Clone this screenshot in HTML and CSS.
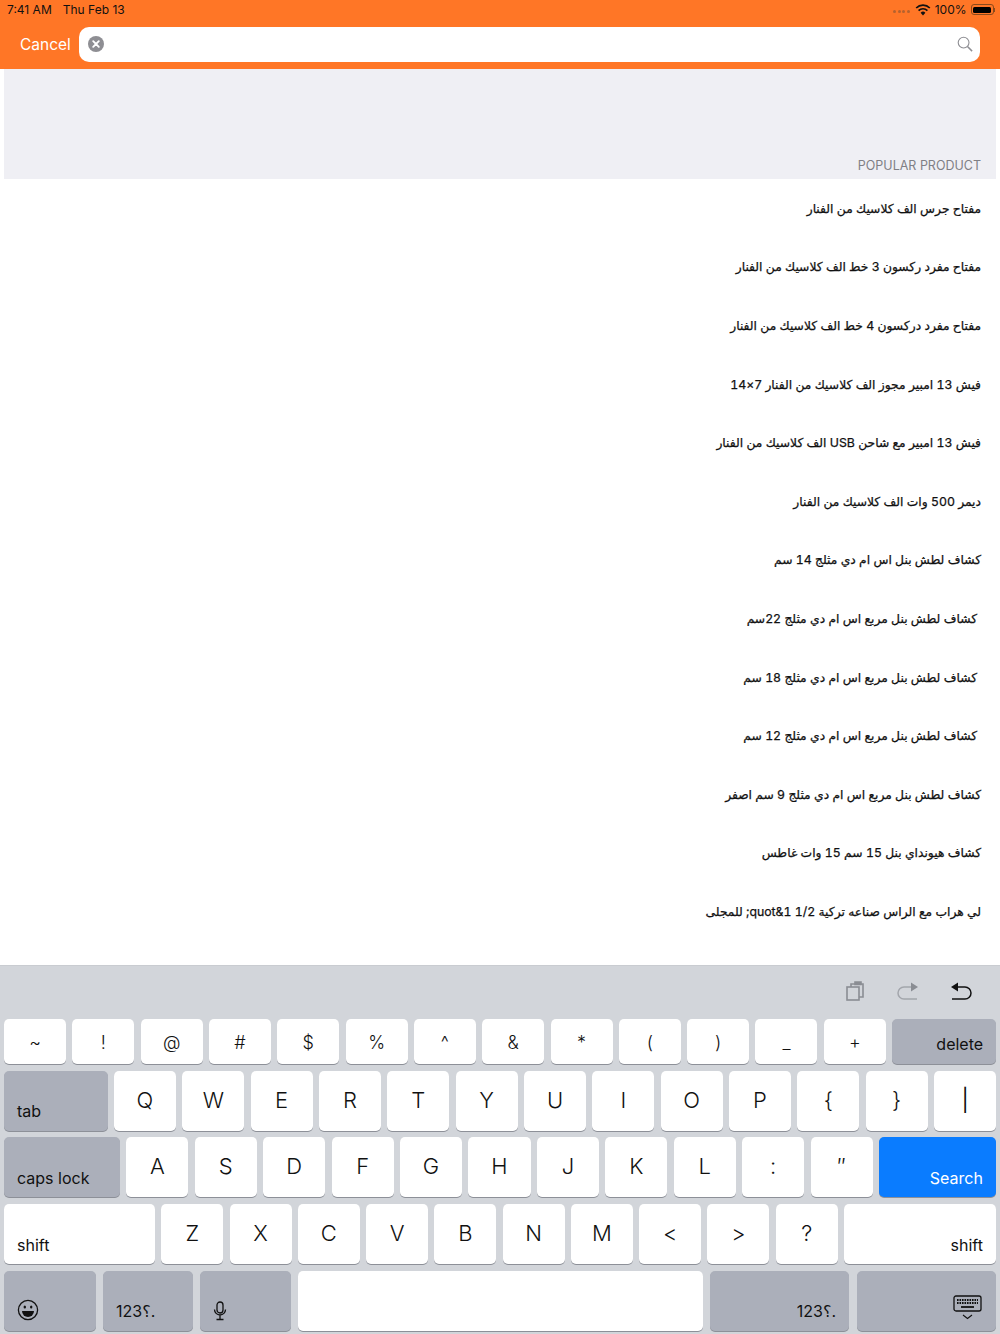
FILE: index.html
```html
<!DOCTYPE html>
<html lang="en">
<head>
    <meta charset="UTF-8">
    <meta name="viewport" content="width=device-width, initial-scale=1.0">
    <title>Search</title>
    <link rel="stylesheet" href="styles.css">
</head>
<body>
    <div class="screen">
        <header class="top-bar">
            <div class="status-bar">
                <div class="status-left">
                    <span>7:41 AM</span>
                    <span>Thu Feb 13</span>
                </div>
                <div class="status-right">
                    <span class="signal"><i></i><i></i><i></i><i></i></span>
                    <svg class="wifi" width="16" height="12" viewBox="0 0 16 12">
                        <path d="M8 11.5 5.6 8.8a3.4 3.4 0 0 1 4.8 0Z" fill="#111"/>
                        <path d="M3.6 6.6a6.2 6.2 0 0 1 8.8 0M1.2 4a9.6 9.6 0 0 1 13.6 0" fill="none" stroke="#111" stroke-width="1.7"/>
                    </svg>
                    <span>100%</span>
                    <span class="battery"><span class="battery-fill"></span></span>
                    <span class="battery-tip"></span>
                </div>
            </div>
            <div class="search-row">
                <span class="cancel">Cancel</span>
                <div class="search-box">
                    <svg width="16" height="16" viewBox="0 0 16 16">
                        <circle cx="8" cy="8" r="8" fill="#8e8e93"/>
                        <path d="M5.2 5.2l5.6 5.6M10.8 5.2l-5.6 5.6" stroke="#fff" stroke-width="1.9" stroke-linecap="round"/>
                    </svg>
                    <svg width="16" height="16" viewBox="0 0 16 16">
                        <circle cx="6.6" cy="6.6" r="5.4" fill="none" stroke="#8e8e93" stroke-width="1.1"/>
                        <path d="M10.5 10.5l4.6 4.6" stroke="#8e8e93" stroke-width="1.5"/>
                    </svg>
                </div>
            </div>
        </header>

        <div class="section-header">
            <span>POPULAR PRODUCT</span>
        </div>

        <ul class="product-list" dir="rtl">
            <li>مفتاح جرس الف كلاسيك من الفنار</li>
            <li>مفتاح مفرد ركسون 3 خط الف كلاسيك من الفنار</li>
            <li>مفتاح مفرد دركسون 4 خط الف كلاسيك من الفنار</li>
            <li>فيش 13 امبير مجوز الف كلاسيك من الفنار 7×14</li>
            <li>فيش 13 امبير مع شاحن USB الف كلاسيك من الفنار</li>
            <li>ديمر 500 وات الف كلاسيك من الفنار</li>
            <li>كشاف لطش بنل اس ام دي مثلج 14 سم</li>
            <li class="inset">كشاف لطش بنل مربع اس ام دي مثلج 22سم</li>
            <li class="inset">كشاف لطش بنل مربع اس ام دي مثلج 18 سم</li>
            <li class="inset">كشاف لطش بنل مربع اس ام دي مثلج 12 سم</li>
            <li>كشاف لطش بنل مربع اس ام دي مثلج 9 سم اصفر</li>
            <li>كشاف هيونداي بنل 15 سم 15 وات غاطس</li>
            <li>لي هراب مع الراس صناعه تركية 1/2 1&amp;quot; للمجلى</li>
        </ul>

        <div class="keyboard">
            <div class="kb-tools">
                <svg width="20" height="20" viewBox="0 0 20 20" fill="none" stroke="#8a8d93" stroke-width="1.6">
                    <rect x="1" y="6" width="12" height="13"/>
                    <path d="M5 6V3h12v13h-4"/>
                    <path d="M9 1h6v2.5H9Z" fill="#8a8d93"/>
                </svg>
                <svg width="22" height="20" viewBox="0 0 22 20" fill="none" stroke="#a3a6ac" stroke-width="1.5">
                    <path d="M14 6H7a6 6 0 0 0 0 12h13"/>
                    <path d="M14 1.5v9l7-4.5Z" fill="#8a8d93" stroke="none"/>
                </svg>
                <svg width="22" height="20" viewBox="0 0 22 20" fill="none" stroke="#111" stroke-width="1.5">
                    <path d="M8 6h7a6 6 0 0 1 0 12H2"/>
                    <path d="M8 1.5v9L1 6Z" fill="#111" stroke="none"/>
                </svg>
            </div>
            <div class="kb-row row-num">
                <span class="key num">~</span><span class="key num">!</span><span class="key num">@</span><span class="key num">#</span><span class="key num">$</span><span class="key num">%</span><span class="key num">^</span><span class="key num">&amp;</span><span class="key num">*</span><span class="key num">(</span><span class="key num">)</span><span class="key num">_</span><span class="key num">+</span>
                <span class="key fn right w-delete">delete</span>
            </div>
            <div class="kb-row">
                <span class="key fn left w-tab">tab</span>
                <span class="key">Q</span><span class="key">W</span><span class="key">E</span><span class="key">R</span><span class="key">T</span><span class="key">Y</span><span class="key">U</span><span class="key">I</span><span class="key">O</span><span class="key">P</span><span class="key">{</span><span class="key">}</span><span class="key bar">|</span>
            </div>
            <div class="kb-row">
                <span class="key fn left w-caps">caps lock</span>
                <span class="key">A</span><span class="key">S</span><span class="key">D</span><span class="key">F</span><span class="key">G</span><span class="key">H</span><span class="key">J</span><span class="key">K</span><span class="key">L</span><span class="key">:</span><span class="key">″</span>
                <span class="key fn right w-search search-key">Search</span>
            </div>
            <div class="kb-row">
                <span class="key fn left white w-shift">shift</span>
                <span class="key">Z</span><span class="key">X</span><span class="key">C</span><span class="key">V</span><span class="key">B</span><span class="key">N</span><span class="key">M</span><span class="key">&lt;</span><span class="key">&gt;</span><span class="key">?</span>
                <span class="key fn right white w-shift-r">shift</span>
            </div>
            <div class="kb-row row-bottom">
                <span class="key fn left w-emoji">
                    <svg width="22" height="22" viewBox="0 0 22 22" fill="none" stroke="#111" stroke-width="1.3">
                        <circle cx="11" cy="11" r="9.6"/>
                        <ellipse cx="7.8" cy="8" rx="1.2" ry="1.6" fill="#111" stroke="none"/>
                        <ellipse cx="14.2" cy="8" rx="1.2" ry="1.6" fill="#111" stroke="none"/>
                        <path d="M5 12h12a6 6 0 0 1-12 0Z" fill="#111" stroke="none"/>
                    </svg>
                </span>
                <span class="key fn left w-mode">123؟.</span>
                <span class="key fn left w-mic">
                    <svg width="14" height="20" viewBox="0 0 14 20" fill="none" stroke="#111" stroke-width="1.3">
                        <rect x="4" y="1" width="6" height="11" rx="3"/>
                        <path d="M1.5 8.5a5.5 5.5 0 0 0 11 0M7 14v4M3.5 18.5h7"/>
                    </svg>
                </span>
                <span class="key w-space"></span>
                <span class="key fn right w-mode-r">123؟.</span>
                <span class="key fn right w-hide">
                    <svg width="30" height="26" viewBox="0 0 30 26" fill="none" stroke="#111">
                        <rect x="1" y="1" width="27" height="15" rx="2" stroke-width="1.3"/>
                        <path d="M4 5h21M4 8h21" stroke-width="1.8" stroke-dasharray="1.6 0.9"/>
                        <path d="M8 12h13" stroke-width="1.8"/>
                        <path d="M10 20l4.5 3.5L19 20" stroke-width="1.1"/>
                    </svg>
                </span>
            </div>
        </div>
    </div>
</body>
</html>
```

FILE: styles.css
```css
:root {
    --orange: #ff7626;
    --section-bg: #efeff4;
    --kb-bg: #d2d5da;
    --key-fn: #abafba;
    --key-shadow: #8d9098;
    --search-blue: #0a7cff;
}

* {
    margin: 0;
    padding: 0;
    box-sizing: border-box;
}

body {
    background: white;
    color: #111;
    font-family: Inter, "DejaVu Sans", sans-serif;
}

.screen {
    width: 1000px;
    height: 1334px;
    display: flex;
    flex-direction: column;
    overflow: hidden;
}

/* Top bar */
.top-bar {
    height: 69px;
    background: var(--orange);
    flex-shrink: 0;
}

.status-bar {
    height: 27px;
    padding: 0 5px 8px 7px;
    display: flex;
    justify-content: space-between;
    align-items: center;
    font-size: 12px;
}

.status-left {
    display: flex;
    gap: 11px;
}

.status-right {
    display: flex;
    align-items: center;
}

.signal {
    display: flex;
    gap: 1.5px;
    margin-right: 5px;
    margin-top: 4px;
}

.signal i {
    width: 3px;
    height: 3px;
    border-radius: 50%;
    background: #b5622e;
}

.wifi {
    margin-right: 4px;
}

.battery {
    width: 23px;
    height: 11px;
    margin-left: 4px;
    padding: 1.5px;
    border: 1px solid #8a4a1c;
    border-radius: 3px;
    display: flex;
}

.battery-fill {
    flex: 1;
    background: #000;
    border-radius: 1.5px;
}

.battery-tip {
    width: 1.5px;
    height: 4px;
    background: #8a4a1c;
}

.search-row {
    height: 34px;
    display: flex;
    align-items: center;
    padding: 0 20px;
    gap: 8px;
}

.cancel {
    color: white;
    font-size: 15.5px;
}

.search-box {
    flex: 1;
    height: 35px;
    background: white;
    border-radius: 10px;
    padding: 0 7px 0 9px;
    display: flex;
    justify-content: space-between;
    align-items: center;
}

/* Section header */
.section-header {
    height: 110px;
    margin: 0 4px;
    padding: 0 15px 6px;
    background: var(--section-bg);
    color: #7f7f85;
    font-size: 12.5px;
    display: flex;
    justify-content: flex-end;
    align-items: flex-end;
    flex-shrink: 0;
}

/* Product list */
.product-list {
    list-style: none;
    flex: 1;
    padding-right: 19px;
    font-size: 12.3px;
    font-variant-numeric: tabular-nums;
    -webkit-text-stroke: 0.25px #111;
}

.product-list li {
    height: 58.6px;
    display: flex;
    align-items: center;
}

.product-list li.inset {
    padding-right: 4px;
}

/* Keyboard */
.keyboard {
    height: 369px;
    flex-shrink: 0;
    background: var(--kb-bg);
    border-top: 1px solid #c9ccd1;
    padding: 0 4px;
    display: flex;
    flex-direction: column;
    gap: 6.7px;
}

.kb-tools {
    height: 46.3px;
    padding: 4px 24px 0 0;
    display: flex;
    justify-content: flex-end;
    align-items: center;
    gap: 31px;
    flex-shrink: 0;
}

.kb-row {
    height: 60px;
    display: flex;
    gap: 6.3px;
    flex-shrink: 0;
}

.kb-row.row-num {
    height: 45px;
}

.kb-row.row-bottom {
    gap: 7px;
}

.key {
    flex: 1 1 0;
    min-width: 0;
    padding-bottom: 2px;
    background: white;
    border-radius: 5px;
    box-shadow: 0 1px 0 var(--key-shadow);
    font-size: 22px;
    display: flex;
    justify-content: center;
    align-items: center;
    font-weight: 300;
}

.key.bar {
    font-weight: 400;
}

.key.num {
    padding: 3px 0 0;
    font-size: 18px;
}

.key.fn {
    flex: none;
    background: var(--key-fn);
    font-size: 16px;
    align-items: flex-end;
    padding: 0 13px 9.5px;
    font-weight: 400;
}

.key.left {
    justify-content: flex-start;
}

.key.right {
    justify-content: flex-end;
}

.key.white {
    background: white;
}

.key.search-key {
    background: var(--search-blue);
    color: white;
}

.w-delete { width: 104px; }
.w-tab { width: 103.6px; }
.w-caps { width: 116px; }
.w-search { width: 117px; }
.w-shift { width: 151px; }
.w-shift-r { width: 152px; }
.w-emoji { width: 92px; }
.w-mode { width: 90px; }
.w-mic { width: 91px; }
.w-space { flex: 1 1 0; }
.w-mode-r { width: 139px; }
.w-hide { width: 139px; margin-left: 1px; }
```
